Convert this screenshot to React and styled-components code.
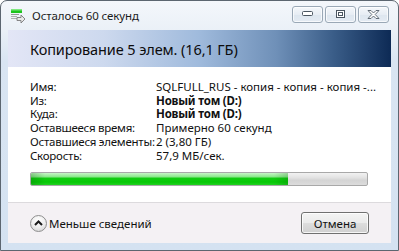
import React from 'react';
import styled, { createGlobalStyle } from 'styled-components';

const GlobalStyle = createGlobalStyle`
    html, body {
        margin: 0;
        padding: 0;
        background: #ffffff;
    }
    body {
        font-family: 'Noto Sans', 'Open Sans', sans-serif;
    }
`;

const Window = styled.div`
    width: 399px;
    height: 251px;
    box-sizing: border-box;
    border: 1px solid #5c6670;
    border-radius: 7px 7px 0 0;
    background: linear-gradient(180deg, #f4f7fb 0px, #eaf0f7 30px, #d9e5f2 60px, #d4e2f1 100%);
    display: flex;
    flex-direction: column;
    overflow: hidden;
`;

const TitleBar = styled.div`
    height: 29px;
    display: flex;
    align-items: center;
    padding: 0 9px 0 9px;
`;

const TitleText = styled.span`
    margin-left: 6px;
    font-family: 'Noto Sans', sans-serif;
    font-size: 11.5px;
    color: #1c1c1c;
    letter-spacing: -0.1px;
    flex: 1;
`;

const Controls = styled.div`
    display: flex;
    gap: 2px;
    margin-top: -3px;
`;

const CtrlButton = styled.div`
    width: 29px;
    height: 15px;
    border: 1px solid #9aa8b6;
    border-radius: 3px;
    background: linear-gradient(180deg, #f5f8fb 0%, #e7edf4 50%, #dde6ef 51%, #e4ebf3 100%);
    display: flex;
    align-items: center;
    justify-content: center;
    box-shadow: inset 0 0 0 1px rgba(255, 255, 255, 0.7);
`;

const Client = styled.div`
    flex: 1;
    margin: 0 7px 7px 7px;
    display: flex;
    flex-direction: column;
    background: #ffffff;
`;

const Header = styled.div`
    height: 37px;
    display: flex;
    align-items: center;
    padding-left: 22px;
    background: linear-gradient(90deg, #e3e6f6 0%, #cdd9ee 25%, #9fbadc 50%, #6f90b8 70%, #3a5d88 85%, #0d2a55 100%);
`;

const HeaderText = styled.span`
    font-family: 'Noto Sans', sans-serif;
    font-size: 14.5px;
    color: #0c0c0c;
    letter-spacing: -0.1px;
`;

const Body = styled.div`
    flex: 1;
    padding: 13px 22px 0 22px;
    display: flex;
    flex-direction: column;
`;

const InfoGrid = styled.div`
    display: grid;
    grid-template-columns: 126px 1fr;
    row-gap: 0;
    font-family: 'Noto Sans', sans-serif;
    font-size: 11.5px;
    line-height: 13.7px;
    color: #111111;
`;

const Label = styled.div`
    white-space: nowrap;
    letter-spacing: -0.25px;
`;

const Value = styled.div`
    white-space: nowrap;
    letter-spacing: ${(p) => (p.bold ? '-0.2px' : '0')};
    font-weight: ${(p) => (p.bold ? 700 : 400)};
`;

const Progress = styled.div`
    margin-top: 10px;
    width: 338px;
    height: 14px;
    box-sizing: border-box;
    border: 1px solid #a8a8a8;
    border-radius: 2px;
    background: linear-gradient(180deg, #f2f2f2 0%, #e2e2e2 40%, #d4d4d4 60%, #dcdcdc 100%);
    overflow: hidden;
    display: flex;
`;

const ProgressFill = styled.div`
    height: 100%;
    background:
        linear-gradient(90deg, rgba(0, 80, 0, 0.25) 0px, rgba(0, 80, 0, 0) 14px, rgba(0, 80, 0, 0) calc(100% - 14px), rgba(0, 80, 0, 0.2) 100%),
        linear-gradient(180deg, #c8f5c8 0%, #8ee88e 30%, #11cc11 45%, #06c806 75%, #22d022 100%);
`;

const Footer = styled.div`
    height: 40px;
    border-top: 1px solid #dcdadd;
    background: #f4f1f4;
    display: flex;
    align-items: center;
    justify-content: space-between;
    padding: 0 22px 0 22px;
`;

const Toggle = styled.div`
    display: flex;
    align-items: center;
    gap: 2px;
    font-family: 'Noto Sans', sans-serif;
    font-size: 11.5px;
    color: #111111;
`;

const RoundButton = styled.div`
    width: 17px;
    height: 17px;
    box-sizing: border-box;
    border-radius: 50%;
    border: 1px solid #8e8e8e;
    background: radial-gradient(circle at 50% 30%, #ffffff 0%, #eeeeee 50%, #cfcfcf 100%);
    display: flex;
    align-items: center;
    justify-content: center;
`;

const Button = styled.div`
    width: 68px;
    height: 22px;
    box-sizing: border-box;
    border: 1px solid #707070;
    border-radius: 3px;
    background: linear-gradient(180deg, #f4f4f4 0%, #ebebeb 48%, #dddddd 52%, #d0d0d0 100%);
    box-shadow: inset 0 0 0 1px rgba(255, 255, 255, 0.8);
    display: flex;
    align-items: center;
    justify-content: center;
    font-family: 'Noto Sans', sans-serif;
    font-size: 11.5px;
    color: #111111;
`;

const CopyIcon = () => (
    <svg width="16" height="15" viewBox="0 0 16 15">
        <rect x="1" y="1" width="11" height="4" fill="#1ec41e" />
        <rect x="1" y="1" width="11" height="1.5" fill="#7fe87f" />
        <rect x="1" y="6" width="8" height="1" fill="#9a9a9a" />
        <rect x="1" y="8" width="6" height="1" fill="#b0b0b0" />
        <rect x="1" y="10" width="6" height="1" fill="#b0b0b0" />
        <path d="M7 9.5 H11 V7 L15 11 L11 15 V12.5 H7 Z" fill="#e8e8e8" stroke="#7a7a7a" strokeWidth="0.9" />
    </svg>
);

const MinGlyph = () => (
    <svg width="11" height="6" viewBox="0 0 11 6">
        <rect x="0.5" y="0.5" width="10" height="4" rx="1" fill="#ffffff" stroke="#4a5560" />
    </svg>
);

const MaxGlyph = () => (
    <svg width="9" height="8" viewBox="0 0 9 8">
        <rect x="0.5" y="0.5" width="8" height="7" fill="#ffffff" stroke="#4a5560" />
        <rect x="2.5" y="2.5" width="4" height="3" fill="#ffffff" stroke="#4a5560" />
    </svg>
);

const CloseGlyph = () => (
    <svg width="13" height="9" viewBox="0 0 13 9">
        <path
            d="M1 0.5 H4 L6.5 3 L9 0.5 H12 L8.2 4.5 L12 8.5 H9 L6.5 6 L4 8.5 H1 L4.8 4.5 Z"
            fill="#ffffff"
            stroke="#55606b"
            strokeWidth="0.9"
            strokeLinejoin="round"
        />
    </svg>
);

const Chevron = () => (
    <svg width="9" height="6" viewBox="0 0 9 6">
        <path d="M1 5 L4.5 1.5 L8 5" fill="none" stroke="#1a1a1a" strokeWidth="2" />
    </svg>
);

const rows = [
    { label: 'Имя:', value: 'SQLFULL_RUS - копия - копия - копия -...' },
    { label: 'Из:', value: 'Новый том (D:)', bold: true },
    { label: 'Куда:', value: 'Новый том (D:)', bold: true },
    { label: 'Оставшееся время:', value: 'Примерно 60 секунд' },
    { label: 'Оставшиеся элементы:', value: '2 (3,80 ГБ)' },
    { label: 'Скорость:', value: '57,9 МБ/сек.' },
];

const App = () => {
    const progress = 76.5;
    return (
        <>
            <GlobalStyle />
            <Window>
                <TitleBar>
                    <CopyIcon />
                    <TitleText>Осталось 60 секунд</TitleText>
                    <Controls>
                        <CtrlButton>
                            <MinGlyph />
                        </CtrlButton>
                        <CtrlButton>
                            <MaxGlyph />
                        </CtrlButton>
                        <CtrlButton>
                            <CloseGlyph />
                        </CtrlButton>
                    </Controls>
                </TitleBar>
                <Client>
                    <Header>
                        <HeaderText>Копирование 5 элем. (16,1 ГБ)</HeaderText>
                    </Header>
                    <Body>
                        <InfoGrid>
                            {rows.map((r) => (
                                <React.Fragment key={r.label}>
                                    <Label>{r.label}</Label>
                                    <Value bold={r.bold}>{r.value}</Value>
                                </React.Fragment>
                            ))}
                        </InfoGrid>
                        <Progress>
                            <ProgressFill style={{ width: `${progress}%` }} />
                        </Progress>
                    </Body>
                    <Footer>
                        <Toggle>
                            <RoundButton>
                                <Chevron />
                            </RoundButton>
                            Меньше сведений
                        </Toggle>
                        <Button>Отмена</Button>
                    </Footer>
                </Client>
            </Window>
        </>
    );
};

export default App;
